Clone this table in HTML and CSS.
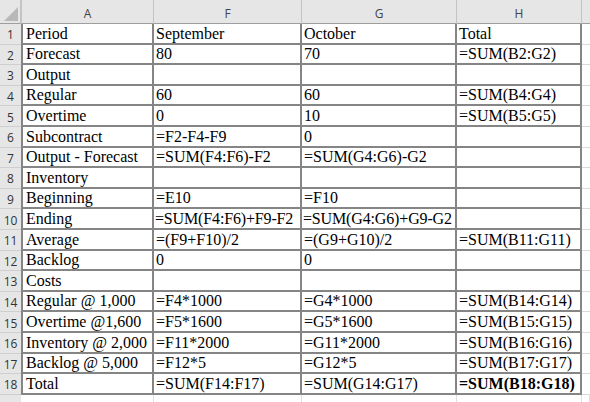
FILE: index.html
```html
<!DOCTYPE html>
<html>
<head>
<meta charset="utf-8">
<link rel="stylesheet" href="styles.css">
</head>
<body>
<div class="sheet">
  <div class="hd corner"><span class="tri"></span></div>
  <div class="hd col">A</div>
  <div class="hd col">F</div>
  <div class="hd col">G</div>
  <div class="hd col">H</div>
  <div class="hd col last"></div>

  <div class="rn">1</div><div class="c a">Period</div><div class="c">September</div><div class="c">October</div><div class="c">Total</div><div class="x"></div>
  <div class="rn">2</div><div class="c a">Forecast</div><div class="c">80</div><div class="c">70</div><div class="c">=SUM(B2:G2)</div><div class="x"></div>
  <div class="rn">3</div><div class="c a">Output</div><div class="c"></div><div class="c"></div><div class="c"></div><div class="x"></div>
  <div class="rn">4</div><div class="c a">Regular</div><div class="c">60</div><div class="c">60</div><div class="c">=SUM(B4:G4)</div><div class="x"></div>
  <div class="rn">5</div><div class="c a">Overtime</div><div class="c">0</div><div class="c">10</div><div class="c">=SUM(B5:G5)</div><div class="x"></div>
  <div class="rn">6</div><div class="c a">Subcontract</div><div class="c">=F2-F4-F9</div><div class="c">0</div><div class="c"></div><div class="x"></div>
  <div class="rn">7</div><div class="c a">Output - Forecast</div><div class="c">=SUM(F4:F6)-F2</div><div class="c">=SUM(G4:G6)-G2</div><div class="c"></div><div class="x"></div>
  <div class="rn">8</div><div class="c a">Inventory</div><div class="c"></div><div class="c"></div><div class="c"></div><div class="x"></div>
  <div class="rn">9</div><div class="c a">Beginning</div><div class="c">=E10</div><div class="c">=F10</div><div class="c"></div><div class="x"></div>
  <div class="rn">10</div><div class="c a">Ending</div><div class="c tight">=SUM(F4:F6)+F9-F2</div><div class="c tight">=SUM(G4:G6)+G9-G2</div><div class="c"></div><div class="x"></div>
  <div class="rn">11</div><div class="c a">Average</div><div class="c">=(F9+F10)/2</div><div class="c">=(G9+G10)/2</div><div class="c">=SUM(B11:G11)</div><div class="x"></div>
  <div class="rn">12</div><div class="c a">Backlog</div><div class="c">0</div><div class="c">0</div><div class="c"></div><div class="x"></div>
  <div class="rn">13</div><div class="c a">Costs</div><div class="c"></div><div class="c"></div><div class="c"></div><div class="x"></div>
  <div class="rn">14</div><div class="c a">Regular @ 1,000</div><div class="c">=F4*1000</div><div class="c">=G4*1000</div><div class="c">=SUM(B14:G14)</div><div class="x"></div>
  <div class="rn">15</div><div class="c a">Overtime @1,600</div><div class="c">=F5*1600</div><div class="c">=G5*1600</div><div class="c">=SUM(B15:G15)</div><div class="x"></div>
  <div class="rn">16</div><div class="c a">Inventory @ 2,000</div><div class="c">=F11*2000</div><div class="c">=G11*2000</div><div class="c">=SUM(B16:G16)</div><div class="x"></div>
  <div class="rn">17</div><div class="c a">Backlog @ 5,000</div><div class="c">=F12*5</div><div class="c">=G12*5</div><div class="c">=SUM(B17:G17)</div><div class="x"></div>
  <div class="rn">18</div><div class="c a">Total</div><div class="c">=SUM(F14:F17)</div><div class="c">=SUM(G14:G17)</div><div class="c b">=SUM(B18:G18)</div><div class="x"></div>

  <div class="rn tail"></div><div class="t"></div><div class="t"></div><div class="t"></div><div class="t"></div><div class="t"></div>
</div>
</body>
</html>
```

FILE: styles.css
```css
* { box-sizing: border-box; }
html, body { margin: 0; padding: 0; background: #ffffff; }
body { width: 590px; height: 402px; overflow: hidden; }

.sheet {
  display: grid;
  grid-template-columns: 21px 133px 148px 155px 125px 8px;
  grid-template-rows: 24px repeat(18, 20.6px) 8px;
  width: 590px;
}

.hd {
  background: #e6e6e6;
  border-bottom: 1px solid #9e9e9e;
  font-family: "Open Sans", "Noto Sans", sans-serif;
  font-size: 12px;
  color: #444444;
  display: flex;
  align-items: center;
  justify-content: center;
  padding-top: 4px;
}
.col { border-right: 1px solid #c4c4c4; }
.col:nth-child(2) { border-left: 1px solid #c4c4c4; }
.col.last { border-right: none; }
.corner { position: relative; border-right: 1px solid #c4c4c4; }
.tri {
  position: absolute;
  right: 2px;
  bottom: 2px;
  width: 0;
  height: 0;
  border-left: 14px solid transparent;
  border-bottom: 14px solid #b8b8b8;
}

.rn {
  background: #e6e6e6;
  border-bottom: 1px solid #cfcfcf;
  font-family: "Open Sans", "Noto Sans", sans-serif;
  font-size: 12px;
  color: #333333;
  display: flex;
  align-items: center;
  justify-content: center;
  padding-top: 2px;
}
.rn.tail { border-bottom: none; }

.c {
  border-right: 2px solid #858585;
  border-bottom: 2px solid #858585;
  font-family: "Liberation Serif", "Times New Roman", serif;
  font-size: 16px;
  color: #000000;
  display: flex;
  align-items: flex-end;
  padding: 0 0 0 2px;
  line-height: 18px;
  white-space: nowrap;
  overflow: hidden;
}
.c.a { border-left: 2px solid #858585; padding-left: 3px; }
.c.b { font-weight: bold; }
.c.tight { letter-spacing: -0.15px; padding-left: 1px; }
.x { border-bottom: 1px solid #d9d9d9; }
.t { border-right: 1px solid #e0e0e0; }
```
